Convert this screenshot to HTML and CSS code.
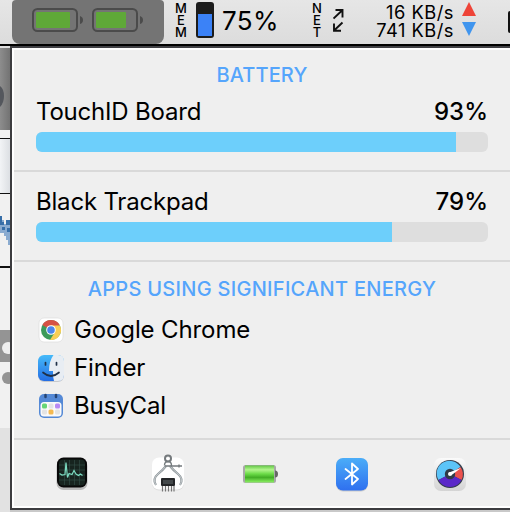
FILE: index.html
```html
<!DOCTYPE html>
<html lang="en">
<head>
<meta charset="utf-8">
<title>Battery menu</title>
<link rel="stylesheet" href="styles.css">
</head>
<body>
<header class="menubar">
  <div class="cells">
    <svg width="51" height="24" viewBox="0 0 51 24"><rect x="1" y="1" width="44" height="22" rx="4.5" fill="none" stroke="#4b4b4b" stroke-width="2"/><rect x="4" y="4" width="34" height="16" rx="1" fill="#5fa838"/><path d="M48 8q3 1 3 4t-3 4z" fill="#4b4b4b"/></svg>
    <svg width="51" height="24" viewBox="0 0 51 24"><rect x="1" y="1" width="44" height="22" rx="4.5" fill="none" stroke="#4b4b4b" stroke-width="2"/><rect x="4" y="4" width="30" height="16" rx="1" fill="#5fa838"/><path d="M48 8q3 1 3 4t-3 4z" fill="#4b4b4b"/></svg>
  </div>
  <div class="stack mem"><span>M</span><span>E</span><span>M</span></div>
  <div class="gauge"><div class="gauge-fill"></div></div>
  <div class="mem-value">75%</div>
  <div class="stack net"><span>N</span><span>E</span><span>T</span></div>
  <svg class="arrows" width="11" height="24" viewBox="0 0 11 24" fill="none" stroke="#111" stroke-width="1.9"><path d="M.5 9.500 9 1.500M2.500 1H9.500v7.500M9.500 13.500.8 21.800M1 14.500v7.200h7"/></svg>
  <div class="rates"><span class="up">16 KB/s</span><span class="down">741 KB/s</span></div>
  <svg class="triangles" width="14" height="34" viewBox="0 0 14 34"><path d="M7 0 14 14H0z" fill="#ee4438"/><path d="M0 20h14L7 34z" fill="#4095ee"/></svg>
  <div class="next-item"></div>
</header>
<main class="desktop">
  <svg class="behind" width="10" height="464" viewBox="0 0 10 464">
    <defs><linearGradient id="shade" x2="1" y2="0"><stop offset="0" stop-color="#8d8d8d"/><stop offset="1" stop-color="#737373"/></linearGradient><linearGradient id="pale" x2="1" y2="0"><stop offset="0" stop-color="#f2f4f6"/><stop offset="1" stop-color="#dcdfe3"/></linearGradient></defs>
    <path fill="#f1f1f1" d="M0 0h10v464H0z"/>
    <path fill="url(#shade)" d="M0 0h10v82H0z"/>
    <path fill="#54575d" d="M0 38q4 3 4 10t-4 11z"/>
    <path fill="url(#pale)" d="M0 91h10v54H0z"/>
    <path fill="#111" d="M0 90h10v1H0zM0 145h10v1H0zM0 218h10v2H0z"/>
    <path fill="#8aabd0" d="M0 172h4v4h6v21H8v-5H6v-4H4v-3H0z"/><path fill="#376ea8" d="M0 168h2v6h2v3H0zM6 172h4v5H6zM2 179h3v3H2zM7 180h3v4H7z"/>
    <path fill="#949494" d="M0 282h10v32H0z"/><circle cx="8" cy="300" r="6" fill="#eee"/><circle cx="8" cy="330" r="6" fill="#949494"/>
    <path fill="#e2e2e2" d="M0 380h10v84H0z"/>
  </svg>
  <div class="panel">
    <section class="batteries">
      <h2>BATTERY</h2>
      <div class="device"><span class="name">TouchID Board</span><span class="level">93%</span></div>
      <div class="bar"><div class="fill" style="width:420px"></div></div>
    </section>
    <section class="second">
      <div class="device"><span class="name">Black Trackpad</span><span class="level">79%</span></div>
      <div class="bar"><div class="fill" style="width:356px"></div></div>
    </section>
    <section class="energy">
      <h2 class="long">APPS USING SIGNIFICANT ENERGY</h2>
      <ul>
        <li><svg width="30" height="30" viewBox="0 0 30 30"><rect x="3" y="3" width="24" height="24" rx="5" fill="#fff" stroke="#ddd" stroke-width=".7"/><circle cx="15" cy="15" r="10" fill="#3d9b5b"/><path d="M15 15 6.3 10A10 10 0 0 1 23.7 10z" fill="#d65245"/><path d="M15 10.5h8.9A10 10 0 0 1 14 25l5-8z" fill="#f8ce55"/><circle cx="15" cy="15" r="4.8" fill="#fff"/><circle cx="15" cy="15" r="3.8" fill="#4c86ec"/></svg><span>Google Chrome</span></li>
        <li><svg width="30" height="30" viewBox="0 0 30 30"><defs><linearGradient id="face" x2="0" y2="1"><stop stop-color="#45baf9"/><stop offset="1" stop-color="#246de4"/></linearGradient></defs><rect x="2" y="3" width="26" height="26" rx="6" fill="#c6c9cd"/><rect x="2" y="2" width="26" height="26" rx="6" fill="url(#face)"/><path d="M17.5 2H22q6 0 6 6v14q0 6-6 6h-4q-1.500-5-1-10h-4Q13 8 17.500 2z" fill="#e8edf3"/><path d="M9.500 9.500v2.500M20.500 9.500v2.500M7 19.500q8 7 16 0" fill="none" stroke="#203047" stroke-width="1.700" stroke-linecap="round"/></svg><span>Finder</span></li>
        <li><svg width="30" height="30" viewBox="0 0 30 30"><rect x="3" y="3" width="24" height="24" rx="5" fill="#5489d6"/><rect x="4.500" y="11" width="21" height="14.500" rx="3.500" fill="#fafafa"/><path d="M9.500 4v2M20 4v2" stroke="#254474" stroke-width="2.500" stroke-linecap="round"/><rect x="6" y="12.500" width="5" height="5" rx="1.500" fill="#66d577"/><rect x="12.500" y="12.500" width="5" height="5" rx="1.500" fill="#e4e4e4"/><rect x="19" y="12.500" width="5" height="5" rx="1.500" fill="#b98af4"/><rect x="6" y="18.500" width="5" height="5" rx="1.500" fill="#e4e4e4"/><rect x="12.500" y="18.500" width="5" height="5" rx="1.500" fill="#f5b950"/><rect x="19" y="18.500" width="5" height="5" rx="1.500" fill="#e4e4e4"/></svg><span>BusyCal</span></li>
      </ul>
    </section>
    <nav class="dock">
      <svg width="36" height="40" viewBox="0 0 36 40"><rect x="2.500" y="5" width="31" height="31" rx="7" fill="#b9b9b9"/><rect x="3" y="3.500" width="30" height="30" rx="6.500" fill="#080808"/><rect x="5" y="5.500" width="26" height="26" rx="4" fill="#17241f"/><path d="M10.500 6v25M15.500 6v25M20.500 6v25M25.500 6v25M5 11h26M5 16h26M5 21h26M5 26h26" stroke="#34504a" stroke-width=".6"/><path d="M5.500 19.500l2.500 1.500 3-.5 1-12 1.500 15 1.500-4 3 1 2-4 2 3.500 2.500 1.500 2-1.500 2 1.500" fill="none" stroke="#7bdcc1" stroke-width="1.200"/></svg>
      <svg width="36" height="40" viewBox="0 0 36 40"><rect x="2" y="4.500" width="32" height="32" rx="7" fill="#ddd"/><rect x="2" y="3.500" width="32" height="32" rx="7" fill="#fff"/><g fill="none"><path d="M16 12Q13 16 8 20q-6 5-2 11M20 12q3 4 8 8 6 5 2 11" stroke="#8e969a" stroke-width="2.200"/><path d="M16 12Q13 16 8 20q-6 5-2 11M20 12q3 4 8 8 6 5 2 11" stroke="#d0d6d8" stroke-width=".8"/><circle cx="18" cy="4.500" r="3" stroke="#74797c" stroke-width="2"/><path d="M14.500 11.500q0-4 3.500-4t3.500 4M15 12h17M29 10.500v3" stroke="#747a7d" stroke-width="1.400"/></g><rect x="11" y="24" width="14" height="8" rx="1" fill="#242628"/><rect x="13" y="26" width="10" height="4" fill="#44494b"/><path d="M12.500 32v5.500M15.500 32v5.500M18.500 32v5.500M21.500 32v5.500M24 32v5.500" stroke="#777" stroke-width="1.200"/></svg>
      <svg width="36" height="40" viewBox="0 0 36 40"><defs><linearGradient id="cell" x2="0" y2="1"><stop stop-color="#62c746"/><stop offset=".25" stop-color="#b2f58d"/><stop offset=".5" stop-color="#69da46"/><stop offset=".7" stop-color="#42ae26"/><stop offset="1" stop-color="#8cf163"/></linearGradient></defs><rect x="1" y="11" width="33" height="18" rx="2.500" fill="#a8a8a8"/><rect x="3" y="11.500" width="29" height="17" fill="url(#cell)"/><path d="M33 16.500q3 0 3 3.500t-3 3.500z" fill="#666"/></svg>
      <svg width="36" height="40" viewBox="0 0 36 40"><defs><linearGradient id="blue" x2="0" y2="1"><stop stop-color="#4badf8"/><stop offset="1" stop-color="#2f70ef"/></linearGradient></defs><rect x="2" y="4.500" width="32" height="33" rx="7" fill="#cbcbcb"/><rect x="2" y="4" width="32" height="32.500" rx="7" fill="url(#blue)"/><path d="M11.500 15 24 25l-6 5.500v-21l6 5.500-12.500 10" fill="none" stroke="#fff" stroke-width="1.800" stroke-linejoin="round" stroke-linecap="round"/></svg>
      <svg width="36" height="40" viewBox="0 0 36 40"><defs><linearGradient id="case" x2="0" y2="1"><stop stop-color="#fafafa"/><stop offset="1" stop-color="#d4d4d4"/></linearGradient></defs><rect x="2" y="4" width="32" height="33" rx="7" fill="url(#case)"/><circle cx="18" cy="20" r="14" fill="#333d4c"/><path d="M18 20 6.500 26A12.700 12.700 0 0 1 28.500 13z" fill="#5cc4f8"/><path d="M18 20 28.500 13A12.700 12.700 0 0 1 29.500 26z" fill="#ec514d"/><path d="M18 20 29.500 26a13 13 0 0 1-23 0z" fill="#5a28c9"/><circle cx="18" cy="20" r="5.200" fill="#303a47"/><path d="M17 18.500 29 14l-10 7.500z" fill="#fff"/><circle cx="18" cy="20" r="2" fill="#fff"/></svg>
    </nav>
  </div>
</main>
</body>
</html>
```
FILE: styles.css
```css
* { box-sizing: border-box; }
body {
  margin: 0;
  width: 510px;
  height: 512px;
  overflow: hidden;
  background: #c9c9c9;
  color: #000;
  font-family: Inter, "Liberation Sans", sans-serif;
}
svg { display: block; flex: none; }
h2, ul { margin: 0; padding: 0; }
.menubar {
  display: flex;
  height: 46px;
  background: linear-gradient(#e6e6e6, #dcdcdc);
  border-bottom: 2px solid #000;
  white-space: nowrap;
}
.menubar > * { flex: none; }
.cells {
  display: flex;
  gap: 9px;
  width: 152px;
  height: 44px;
  margin-left: 12px;
  padding: 8px 0 0 20px;
  background: #747474;
  border-radius: 4px 4px 8px 8px;
}
.stack {
  display: flex;
  flex-direction: column;
  align-items: center;
  width: 12px;
  padding-top: 2px;
  font-size: 13px;
  font-weight: 500;
  line-height: 12px;
}
.mem { margin-left: 11px; }
.gauge {
  width: 18px;
  height: 36px;
  margin: 2px 0 0 9px;
  padding: 12px 2px 2px;
  background: #1c1c1c;
  border-radius: 3px;
}
.gauge-fill { height: 22px; background: #3b82f7; }
.mem-value {
  width: 64px;
  margin-left: 8px;
  font-size: 26px;
  letter-spacing: 0.4px;
  line-height: 42px;
}
.net { margin-left: 25px; }
.arrows { margin: 9px 0 0 10px; }
.rates {
  display: flex;
  flex-direction: column;
  align-items: flex-end;
  width: 90px;
  margin-left: 20px;
  padding-top: 3px;
  font-size: 18.3px;
  letter-spacing: 0.5px;
  line-height: 18px;
}
.triangles { margin: 2px 0 0 8px; }
.next-item {
  width: 2px;
  height: 22px;
  margin: 11px 0 0 32px;
  background: #111;
  border-radius: 2px 0 0 2px;
}
.desktop {
  display: flex;
  height: 466px;
  padding-top: 2px;
  background: linear-gradient(90deg, #ddd 10px, #404044 10px) 0 0 / 100% 2px no-repeat, #c9c9c9;
}
.behind { height: 464px; }
.panel {
  width: 500px;
  height: 462px;
  padding-left: 2px;
  background: #efefef;
  border-left: 2px solid #3c3c3f;
  border-bottom: 2px solid #3c3c3f;
  box-shadow: inset 2px 2px #fff, inset 0 -2px #fff;
}
section { padding: 0 22px; border-bottom: 2px solid #d9d9d9; }
h2 {
  font-size: 20px;
  font-weight: 500;
  line-height: 24px;
  text-align: center;
  letter-spacing: 0.1px;
  color: #55a5fc;
  white-space: nowrap;
}
.long { letter-spacing: 0.28px; }
.batteries { height: 124px; padding-top: 15px; }
.device {
  display: flex;
  justify-content: space-between;
  height: 30px;
  margin-top: 9px;
  font-size: 24px;
  line-height: 32px;
  white-space: nowrap;
}
.name { letter-spacing: -0.2px; }
.level { font-weight: 500; }
.bar { height: 20px; margin-top: 6px; overflow: hidden; background: #dedede; border-radius: 6px; }
.fill { height: 20px; background: #6dcffb; }
.second { height: 90px; padding-top: 5px; }
.energy { height: 178px; padding-top: 15px; }
ul { list-style: none; margin-top: 10px; }
li {
  display: flex;
  align-items: center;
  gap: 8px;
  height: 38px;
  font-size: 24px;
  letter-spacing: -0.12px;
  line-height: 38px;
  white-space: nowrap;
}
.dock {
  display: grid;
  grid-template-columns: 96px 92px 92px 98px 36px;
  padding: 14px 0 0 40px;
}
```
